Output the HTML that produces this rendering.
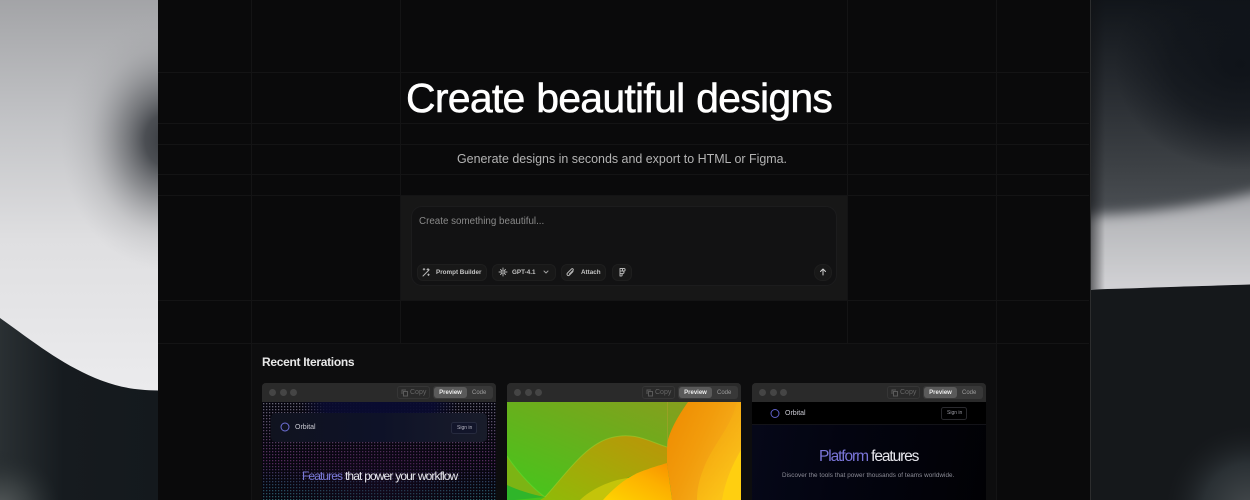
<!DOCTYPE html>
<html><head><meta charset="utf-8"><style>
*{box-sizing:border-box;margin:0;padding:0}
html,body{width:1250px;height:500px;overflow:hidden;background:#0a0a0b}
body{position:relative;font-family:"Liberation Sans",sans-serif;color:#fff}
.a{position:absolute;white-space:nowrap}
.pill{position:absolute;top:264px;height:17px;border-radius:6px;background:#181818;border:1px solid #1e1e1e}
.lbl{position:absolute;top:268px;font-size:6.300px;line-height:9px;color:#c4c4c4;white-space:nowrap;font-weight:bold;filter:blur(.25px)}
.card{position:absolute;top:383px;height:130px;width:234px;background:#2a2a2a;border-radius:4px 4px 0 0;overflow:hidden;filter:blur(.3px)}
.tb{position:absolute;left:0;top:0;width:100%;height:19px;background:#2a2a2a}
.dot{position:absolute;top:6px;width:7px;height:7px;border-radius:50%;background:#454545}
.copy{position:absolute;left:135px;top:3px;width:33px;height:13px;border:1px solid #363636;border-radius:3px;font-size:7px;line-height:12px;color:#666;padding-left:12px}
.copy svg{position:absolute;left:3px;top:2px}
.seg{position:absolute;left:171px;top:3px;width:60px;height:13px;background:#383838;border-radius:3px}
.seg b{position:absolute;left:1px;top:1px;width:33px;height:11px;background:#5a5a5a;border-radius:3px;font-size:6px;line-height:12px;color:#eee;text-align:center}
.seg i{position:absolute;left:39px;top:1px;font-style:normal;font-size:6px;line-height:12px;color:#9c9c9c}
.body{position:absolute;left:0;top:19px;width:100%;height:111px;overflow:hidden}
</style></head><body>

<svg class="a" style="left:0;top:0" width="158" height="500" viewBox="0 0 158 500">
<defs>
<linearGradient id="lw" x1="0" y1="0" x2="0" y2="1"><stop offset="0" stop-color="#a3a4a7"/><stop offset=".3" stop-color="#c2c3c6"/><stop offset=".6" stop-color="#dfdfe1"/><stop offset="1" stop-color="#ececee"/></linearGradient>
<linearGradient id="ldk" x1="0" y1="0" x2="1" y2="0"><stop offset="0" stop-color="#2a3033"/><stop offset=".4" stop-color="#161b1f"/><stop offset="1" stop-color="#14191d"/></linearGradient>
<radialGradient id="lb" cx="0" cy="510" r="60" gradientUnits="userSpaceOnUse"><stop offset="0" stop-color="#565b5c"/><stop offset=".5" stop-color="#363c3e"/><stop offset="1" stop-color="#22282b" stop-opacity="0"/></radialGradient>
<radialGradient id="blob" gradientUnits="userSpaceOnUse" cx="0" cy="0" r="1" gradientTransform="translate(166 140) scale(105 130)">
<stop offset="0" stop-color="#383b40"/><stop offset=".2" stop-color="#45484d" stop-opacity=".95"/><stop offset=".45" stop-color="#6a6c70" stop-opacity=".65"/><stop offset=".72" stop-color="#97989b" stop-opacity=".28"/><stop offset="1" stop-color="#b0b1b4" stop-opacity="0"/></radialGradient>
<clipPath id="lc"><path d="M0 0H158V390.500C130 390 115 386 95 378C60 363 35 343 0 318Z"/></clipPath>
</defs>
<rect width="158" height="500" fill="url(#ldk)"/>
<g clip-path="url(#lc)">
<rect width="158" height="400" fill="url(#lw)"/>
<rect width="158" height="300" fill="url(#blob)"/>
</g>
<rect x="0" y="440" width="70" height="60" fill="url(#lb)"/>
</svg>

<svg class="a" style="left:1090px;top:0" width="160" height="500" viewBox="0 0 160 500">
<defs>
<clipPath id="rc"><path d="M0 0H160V284.500C110 286 50 288 0 289.500Z"/></clipPath>
<linearGradient id="rbase" x1="0" y1="0" x2="0" y2="1"><stop offset="0" stop-color="#11151a"/><stop offset=".35" stop-color="#2b2f34"/><stop offset=".6" stop-color="#3f4347"/><stop offset=".75" stop-color="#4c5055"/><stop offset="1" stop-color="#55585d"/></linearGradient>
<radialGradient id="rdark" gradientUnits="userSpaceOnUse" cx="0" cy="0" r="1" gradientTransform="translate(150 65) scale(125 105)"><stop offset="0" stop-color="#0e1218" stop-opacity=".95"/><stop offset=".55" stop-color="#0e1218" stop-opacity=".65"/><stop offset="1" stop-color="#0e1218" stop-opacity="0"/></radialGradient>
<linearGradient id="rlight" x1="0" y1="0" x2="0" y2="1"><stop offset="0" stop-color="#a3a4a9"/><stop offset=".4" stop-color="#bcbdc0"/><stop offset="1" stop-color="#d6d6d9"/></linearGradient>
<linearGradient id="rl" x1="0" y1="0" x2="1" y2="0"><stop offset="0" stop-color="#101114"/><stop offset="1" stop-color="#101114" stop-opacity="0"/></linearGradient>
<radialGradient id="rb" cx="160" cy="510" r="85" gradientUnits="userSpaceOnUse"><stop offset="0" stop-color="#44494c"/><stop offset=".55" stop-color="#2a3034"/><stop offset="1" stop-color="#1a1d20" stop-opacity="0"/></radialGradient>
<filter id="r6" x="-30%" y="-30%" width="160%" height="160%"><feGaussianBlur stdDeviation="6"/></filter>
</defs>
<rect width="160" height="500" fill="#15181b"/>
<g clip-path="url(#rc)">
<rect width="160" height="290" fill="url(#rbase)"/>
<rect width="160" height="200" fill="url(#rdark)"/>
<path d="M-30 216C40 216 110 208 190 186V300H-30Z" fill="url(#rlight)" filter="url(#r6)"/>
<rect x="1" y="0" width="14" height="289" fill="url(#rl)" opacity=".55"/>
</g>
<rect x="0" y="0" width="1" height="500" fill="#2c2d2e"/>
<rect x="60" y="410" width="100" height="90" fill="url(#rb)"/>
</svg>

<div class="a" style="left:158px;top:0;width:932px;height:500px;background:#0a0a0b"></div>
<div class="a" style="left:251px;top:343px;width:745px;height:157px;background:#0d0d0e"></div>

<svg class="a" style="left:0;top:0" width="1250" height="500">
<g stroke="#141415" stroke-width="1">
<path d="M158 72.500H1089M158 123.500H1089M158 144.500H1089M158 174.500H1089M158 195.500H1089M158 300.500H1089M158 343.500H1089"/>
<path d="M251.500 0V500M400.500 0V343M847.500 0V343M996.500 0V500"/>
</g>
</svg>

<div class="a" style="left:406px;top:72px;font-size:41px;line-height:52px;letter-spacing:-.75px;word-spacing:1px;-webkit-text-stroke:.5px #fff">Create beautiful designs</div>
<div class="a" style="left:457px;top:151px;font-size:12.450px;line-height:16px;color:#b4b4b4">Generate designs in seconds and export to HTML or Figma.</div>

<div class="a" style="left:401px;top:196px;width:446px;height:104px;background:#171717"></div>
<div class="a" style="left:411px;top:206px;width:426px;height:80px;background:#121213;border:1px solid #1c1c1d;border-radius:11px"></div>
<div class="a" style="left:419px;top:215px;margin-top:1px;font-size:9.800px;line-height:12px;color:#8a8a8a">Create something beautiful...</div>

<div class="pill" style="left:417px;width:70px"></div>
<div class="pill" style="left:492px;width:64px"></div>
<div class="pill" style="left:561px;width:45px"></div>
<div class="pill" style="left:612px;width:20px"></div>
<div class="pill" style="left:814px;width:18px;border-radius:8px"></div>

<svg class="a" style="left:0;top:0;filter:blur(.25px)" width="1250" height="500" fill="none" stroke="#b5b5b5" stroke-width="1" stroke-linecap="round" stroke-linejoin="round">
<path d="M423 276L429 270M428 268.500V270.500M427 269.500H429M424 268.500V270M423.200 269.200H424.800M428.500 274V275.500M427.700 274.700H429.300"/>
<path d="M503 268V271M503 273V276M499 272H502M504 272H507M500.500 269.500L502 271M505.500 269.500L504 271M500.500 274.500L502 273M505.500 274.500L504 273" stroke-width=".9"/>
<path d="M544 271L546 273L548 271" stroke="#a0a0a0"/>
<path d="M573 271.500L569.500 275C568 276.500 566 274.500 567.500 273L571.500 269C572.500 268 574 269.500 573 270.500L569.500 274"/>
<path d="M620 268.500H622.500V271H620ZM620 271H622.500M622.500 268.500H624C625.500 268.500 625.500 271 624 271H622.500M620 271V276H621.200C622.500 276 622.500 273.500 621.200 273.500H620M622.500 271C624.500 271 624.500 273.500 622.500 273.500"/>
<path d="M823 275V269M820.500 271.500L823 269L825.500 271.500" stroke="#d0d0d0"/>
</svg>
<div class="lbl" style="left:436px">Prompt Builder</div>
<div class="lbl" style="left:512px">GPT-4.1</div>
<div class="lbl" style="left:581px">Attach</div>

<div class="a" style="left:262px;top:355px;font-size:12px;line-height:15px;font-weight:bold;color:#e8e8e8;letter-spacing:-.3px">Recent Iterations</div>

<!-- card 1 -->
<div class="card" style="left:262px">
  <div class="tb"></div>
  <div class="dot" style="left:7px"></div><div class="dot" style="left:18px"></div><div class="dot" style="left:28px"></div>
  <div class="copy"><svg width="8" height="8" viewBox="0 0 8 8" fill="none" stroke="#5a5a5a"><path d="M2.500 2.500H6.500V7H2.500ZM1 5V1H5"/></svg>Copy</div>
  <div class="seg"><b>Preview</b><i>Code</i></div>
  <div class="body" style="background:#07060f">
    <svg width="234" height="111" style="position:absolute;left:0;top:0">
      <defs>
        <pattern id="dc" width="3" height="3" patternUnits="userSpaceOnUse"><rect x="1" y="1" width="1.300" height="1.300" fill="#fff"/></pattern>
        <mask id="dm"><rect width="234" height="111" fill="url(#dc)"/></mask>
        <linearGradient id="c1" x1="0" y1="0" x2="0" y2="1"><stop offset="0" stop-color="#a8a8bb"/><stop offset=".28" stop-color="#8a6c98"/><stop offset=".55" stop-color="#8a3f90"/><stop offset=".75" stop-color="#3d6f92"/><stop offset="1" stop-color="#47c0a8"/></linearGradient>
        <radialGradient id="cen" cx=".5" cy="0" r=".34"><stop offset="0" stop-color="#090b30"/><stop offset=".7" stop-color="#090b30" stop-opacity=".9"/><stop offset="1" stop-color="#090b30" stop-opacity="0"/></radialGradient>
        <radialGradient id="cen2" cx=".5" cy=".72" r=".45"><stop offset="0" stop-color="#1e0a2a" stop-opacity=".45"/><stop offset="1" stop-color="#1e0a2a" stop-opacity="0"/></radialGradient>
        <linearGradient id="nav" x1="0" y1="0" x2="1" y2="0"><stop offset="0" stop-color="#10131f"/><stop offset=".5" stop-color="#0e1228"/><stop offset="1" stop-color="#191c2a"/></linearGradient>
      </defs>
      <rect width="234" height="111" fill="url(#c1)" mask="url(#dm)" opacity=".6"/>
      <rect width="234" height="111" fill="url(#cen)"/>
      <rect width="234" height="111" fill="url(#cen2)"/>
      <rect x="9" y="11" width="216" height="29" rx="5" fill="url(#nav)"/>
      <circle cx="23" cy="25" r="4" fill="none" stroke="#6f70d8" stroke-width="1"/>
      <rect x="189.500" y="20.500" width="25" height="11" rx="2" fill="#12152a" stroke="#262a3e"/>
    </svg>
    <div class="a" style="left:33px;top:21px;font-size:7px;line-height:9px;color:#c9c9d2">Orbital</div>
    <div class="a" style="left:195px;top:22.500px;font-size:5px;line-height:7px;color:#b5b5c2">Sign in</div>
    <div class="a" style="left:40px;top:67px;font-size:12px;line-height:15px;letter-spacing:-.9px;word-spacing:.4px;color:#e8e8ee"><span style="color:#7a7ad8">Features</span> that power your workflow</div>
  </div>
</div>

<!-- card 2 -->
<div class="card" style="left:507px">
  <div class="tb"></div>
  <div class="dot" style="left:7px"></div><div class="dot" style="left:18px"></div><div class="dot" style="left:28px"></div>
  <div class="copy"><svg width="8" height="8" viewBox="0 0 8 8" fill="none" stroke="#5a5a5a"><path d="M2.500 2.500H6.500V7H2.500ZM1 5V1H5"/></svg>Copy</div>
  <div class="seg"><b>Preview</b><i>Code</i></div>
  <div class="body">
    <svg width="234" height="98" viewBox="507 402 234 98" style="position:absolute;left:0;top:0">
      <defs>
        <linearGradient id="g0" x1="0" y1="1" x2="1" y2="0"><stop offset="0" stop-color="#42c81c"/><stop offset=".55" stop-color="#6cad1c"/><stop offset="1" stop-color="#8f991e"/></linearGradient>
        <linearGradient id="g1" x1="0" y1="1" x2="1" y2="0"><stop offset="0" stop-color="#8fbb08"/><stop offset="1" stop-color="#bc9408"/></linearGradient>
        <linearGradient id="g2" x1="0" y1="0" x2="1" y2=".6"><stop offset="0" stop-color="#ee8a00"/><stop offset=".5" stop-color="#f29c0c"/><stop offset="1" stop-color="#f7b420"/></linearGradient>
        <linearGradient id="g3" x1="0" y1="1" x2="1" y2="0"><stop offset="0" stop-color="#ffd400"/><stop offset=".6" stop-color="#fdb000"/><stop offset="1" stop-color="#f79000"/></linearGradient>
        <linearGradient id="g5" x1="0" y1="0" x2=".4" y2="1"><stop offset="0" stop-color="#f2a30f" stop-opacity=".6"/><stop offset="1" stop-color="#ffcf12"/></linearGradient>
      </defs>
      <rect x="507" y="402" width="234" height="98" fill="url(#g0)"/>
      <path d="M507 456C520 475 535 490 545 497L507 500Z" fill="#7cb414"/>
      <path d="M507 485C518 490 530 494 545 497L515 500H507Z" fill="#2fb52a"/>
      <path d="M507 456C520 475 535 490 545 497" fill="none" stroke="#5ee030" stroke-opacity=".6"/>
      <path d="M545 497C565 475 585 445 610 438C635 431 650 442 667 447V463C640 470 610 485 590 500H540Z" fill="url(#g1)"/>
      <path d="M545 497C565 475 585 445 610 438C635 431 650 442 667 447" fill="none" stroke="#9fd030" stroke-opacity=".55" stroke-width="1"/>
      <path d="M580 500C590 490 610 480 628 478L672 500Z" fill="#c4c40a"/>
      <path d="M603 500C612 490 625 478 640 472C650 468 660 465 667 463L672 500Z" fill="url(#g3)"/>
      <path d="M688 402C675 420 667 437 667 447V463C669 478 671 490 672 500H741V402Z" fill="url(#g2)"/>
      <path d="M737 402C730 430 712 445 703 470C699 480 697 490 697 500H741V402Z" fill="url(#g5)" opacity=".55"/>
      <path d="M741 450C732 465 725 482 722 500H741Z" fill="#ffd010" opacity=".9"/>
      <path d="M667.500 402V447" stroke="#b8a030" stroke-opacity=".45"/>
    </svg>
  </div>
</div>

<!-- card 3 -->
<div class="card" style="left:752px">
  <div class="tb"></div>
  <div class="dot" style="left:7px"></div><div class="dot" style="left:18px"></div><div class="dot" style="left:28px"></div>
  <div class="copy"><svg width="8" height="8" viewBox="0 0 8 8" fill="none" stroke="#5a5a5a"><path d="M2.500 2.500H6.500V7H2.500ZM1 5V1H5"/></svg>Copy</div>
  <div class="seg"><b>Preview</b><i>Code</i></div>
  <div class="body" style="background:linear-gradient(100deg,#060819 0,#030410 40%,#010104 100%)">
    <div class="a" style="left:0;top:0;width:234px;height:23px;background:#000;border-bottom:1px solid #131318"></div>
    <svg width="234" height="30" style="position:absolute;left:0;top:0"><circle cx="23" cy="11.500" r="4" fill="none" stroke="#5f60c8" stroke-width="1"/><rect x="189.500" y="5.500" width="25" height="12" rx="2" fill="#000" stroke="#2a2a2e"/></svg>
    <div class="a" style="left:33px;top:7px;font-size:7px;line-height:9px;color:#c9c9d2">Orbital</div>
    <div class="a" style="left:195px;top:8px;font-size:5px;line-height:7px;color:#9a9aa2">Sign in</div>
    <div class="a" style="left:67px;top:46px;font-size:15.500px;line-height:18px;letter-spacing:-1.100px;color:#e8e8ee"><span style="color:#7a75d8">Platform</span> features</div>
    <div class="a" style="left:30px;top:70px;font-size:6.300px;line-height:8px;color:#8d8d98;letter-spacing:.05px">Discover the tools that power thousands of teams worldwide.</div>
  </div>
</div>
</body></html>
